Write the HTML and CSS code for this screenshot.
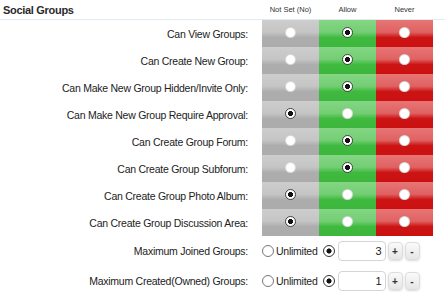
FILE: index.html
```html
<!DOCTYPE html>
<html lang="en">
<head>
    <meta charset="UTF-8">
    <meta name="viewport" content="width=device-width, initial-scale=1.0">
    <title>Social Groups Permissions</title>
    <link rel="stylesheet" href="styles.css">
</head>
<body>
    <div class="perms">
        <div class="head">
            <h3 class="title">Social Groups</h3>
            <div class="col-title">Not Set (No)</div>
            <div class="col-title">Allow</div>
            <div class="col-title">Never</div>
        </div>

        <div class="row">
            <label class="name">Can View Groups:</label>
            <div class="cell unset"><input type="radio" name="view"></div>
            <div class="cell allow"><input type="radio" name="view" checked></div>
            <div class="cell never"><input type="radio" name="view"></div>
        </div>
        <div class="row">
            <label class="name">Can Create New Group:</label>
            <div class="cell unset"><input type="radio" name="create"></div>
            <div class="cell allow"><input type="radio" name="create" checked></div>
            <div class="cell never"><input type="radio" name="create"></div>
        </div>
        <div class="row">
            <label class="name">Can Make New Group Hidden/Invite Only:</label>
            <div class="cell unset"><input type="radio" name="hidden"></div>
            <div class="cell allow"><input type="radio" name="hidden" checked></div>
            <div class="cell never"><input type="radio" name="hidden"></div>
        </div>
        <div class="row">
            <label class="name">Can Make New Group Require Approval:</label>
            <div class="cell unset"><input type="radio" name="approval" checked></div>
            <div class="cell allow"><input type="radio" name="approval"></div>
            <div class="cell never"><input type="radio" name="approval"></div>
        </div>
        <div class="row">
            <label class="name">Can Create Group Forum:</label>
            <div class="cell unset"><input type="radio" name="forum"></div>
            <div class="cell allow"><input type="radio" name="forum" checked></div>
            <div class="cell never"><input type="radio" name="forum"></div>
        </div>
        <div class="row">
            <label class="name">Can Create Group Subforum:</label>
            <div class="cell unset"><input type="radio" name="subforum"></div>
            <div class="cell allow"><input type="radio" name="subforum" checked></div>
            <div class="cell never"><input type="radio" name="subforum"></div>
        </div>
        <div class="row">
            <label class="name">Can Create Group Photo Album:</label>
            <div class="cell unset"><input type="radio" name="album" checked></div>
            <div class="cell allow"><input type="radio" name="album"></div>
            <div class="cell never"><input type="radio" name="album"></div>
        </div>
        <div class="row">
            <label class="name">Can Create Group Discussion Area:</label>
            <div class="cell unset"><input type="radio" name="discussion" checked></div>
            <div class="cell allow"><input type="radio" name="discussion"></div>
            <div class="cell never"><input type="radio" name="discussion"></div>
        </div>

        <div class="row limit">
            <label class="name">Maximum Joined Groups:</label>
            <div class="limit-ctrl">
                <label class="unlimited"><input type="radio" class="plain" name="joined"> Unlimited</label>
                <input type="radio" class="plain" name="joined" checked>
                <input type="text" class="num" value="3">
                <button class="step">+</button>
                <button class="step">-</button>
            </div>
        </div>
        <div class="row limit">
            <label class="name">Maximum Created(Owned) Groups:</label>
            <div class="limit-ctrl">
                <label class="unlimited"><input type="radio" class="plain" name="owned"> Unlimited</label>
                <input type="radio" class="plain" name="owned" checked>
                <input type="text" class="num" value="1">
                <button class="step">+</button>
                <button class="step">-</button>
            </div>
        </div>
    </div>
</body>
</html>
```

FILE: styles.css
```css
body {
    margin: 0;
    background-color: #fff;
    font-family: "Liberation Sans", Arial, sans-serif;
    color: #222;
}
.perms {
    width: 433px;
}
.head, .row {
    display: grid;
    grid-template-columns: 262px 57px 57px 57px;
}
.head {
    height: 19px;
    border-bottom: 1px solid #e3ebf2;
    width: 445px;
    align-items: center;
}
.title {
    margin: 0 0 0 3px;
    font-size: 11px;
    font-weight: bold;
    letter-spacing: -0.3px;
    color: #2a2a2a;
}
.col-title {
    font-size: 7.5px;
    text-align: center;
    color: #333;
    padding-bottom: 1px;
}
.row {
    height: 27px;
    align-items: center;
}
.name {
    text-align: right;
    padding-right: 14px;
    font-size: 10.5px;
    letter-spacing: -0.25px;
    color: #222;
}
.cell {
    height: 27px;
    display: flex;
    justify-content: center;
    padding-top: 7px;
    box-sizing: border-box;
}
.unset {
    background: linear-gradient(to bottom, #cdcdcd 0%, #c5c5c5 45%, #adadad 65%, #acacac 100%);
}
.allow {
    background: linear-gradient(to bottom, #84d684 0%, #74ce74 45%, #3fba3f 65%, #3cb63c 100%);
}
.never {
    background: linear-gradient(to bottom, #e77575 0%, #e06262 45%, #cc1414 65%, #cb1010 100%);
}
.cell input {
    appearance: none;
    margin: 0;
    width: 11px;
    height: 11px;
    box-sizing: border-box;
    border-radius: 50%;
    background: #fff;
    border: 1px solid rgba(0, 0, 0, 0.15);
}
.cell input:checked {
    background: radial-gradient(circle, #111 0 2.3px, #fff 2.8px);
    border-color: #444;
}
.limit {
    height: 30px;
    grid-template-columns: 262px auto;
}
.limit-ctrl {
    display: flex;
    align-items: center;
    font-size: 10.5px;
    letter-spacing: -0.25px;
}
.unlimited {
    display: flex;
    align-items: center;
    margin-right: 5px;
}
.plain {
    appearance: none;
    margin: 0 2px 0 0;
    width: 12px;
    height: 12px;
    box-sizing: border-box;
    border-radius: 50%;
    border: 1px solid #777;
    background: #fff;
}
.plain:checked {
    background: radial-gradient(circle, #111 0 2.3px, #fff 2.8px);
    border-color: #333;
}
.num {
    width: 48px;
    height: 20px;
    box-sizing: border-box;
    margin-left: 1px;
    border: 1px solid #d4d4d4;
    border-radius: 4px;
    text-align: right;
    padding: 0 3px;
    font: 11px "Liberation Sans", Arial, sans-serif;
    color: #222;
}
.step {
    width: 15px;
    height: 18px;
    margin-left: 2px;
    padding: 0;
    border: 1px solid #dcdcdc;
    border-radius: 4px;
    background: linear-gradient(to bottom, #fafafa, #e6e6e6);
    box-shadow: 0 1px 2px rgba(0, 0, 0, 0.15);
    font: bold 10px "Liberation Sans", Arial, sans-serif;
    color: #333;
}
```
